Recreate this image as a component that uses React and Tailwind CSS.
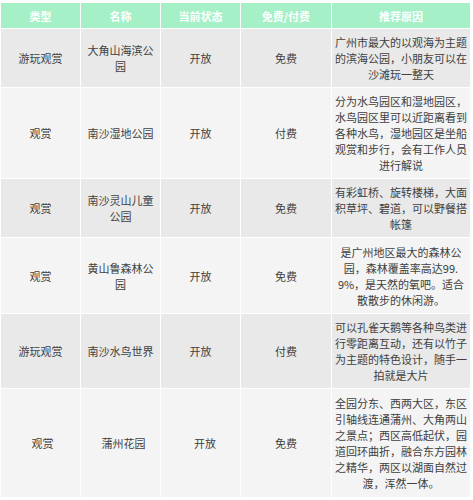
import React from "react";

const rows = [
  { type: "游玩观赏", name: ["大角山海滨公", "园"], status: "开放", fee: "免费", reason: ["广州市最大的以观海为主题", "的滨海公园，小朋友可以在", "沙滩玩一整天"], h: "h-[58px]" },
  { type: "观赏", name: ["南沙湿地公园"], status: "开放", fee: "付费", reason: ["分为水鸟园区和湿地园区，", "水鸟园区里可以近距离看到", "各种水鸟，湿地园区是坐船", "观赏和步行，会有工作人员", "进行解说"], h: "h-[90px]" },
  { type: "观赏", name: ["南沙灵山儿童", "公园"], status: "开放", fee: "免费", reason: ["有彩虹桥、旋转楼梯，大面", "积草坪、碧道，可以野餐搭", "帐篷"], h: "h-[58px]" },
  { type: "观赏", name: ["黄山鲁森林公", "园"], status: "开放", fee: "免费", reason: ["是广州地区最大的森林公", "园，森林覆盖率高达99.", "9%，是天然的氧吧。适合", "散散步的休闲游。"], h: "h-[75px]" },
  { type: "游玩观赏", name: ["南沙水鸟世界"], status: "开放", fee: "付费", reason: ["可以孔雀天鹅等各种鸟类进", "行零距离互动，还有以竹子", "为主题的特色设计，随手一", "拍就是大片"], h: "h-[74px]" },
  { type: "观赏", name: ["蒲州花园"], status: "开放", fee: "免费", reason: ["全园分东、西两大区，东区", "引轴线连通蒲州、大角两山", "之景点；西区高低起伏，园", "道回环曲折，融合东方园林", "之精华，两区以湖面自然过", "渡，浑然一体。"], h: "h-[108px]", last: true },
];

function Cell({ children, bg, extra = "" }) {
  return (
    <div className={`flex flex-col items-center justify-center text-center ${bg} ${extra}`}>
      {children}
    </div>
  );
}

export default function App() {
  return (
    <div className="w-[473px] h-[500px] bg-white pt-[3px] pl-[1px]" style={{ fontFamily: '"Noto Sans CJK SC", "Noto Sans", sans-serif' }}>
      <div className="grid grid-cols-[79px_79px_79px_90px_138px] gap-px bg-white text-[11px] leading-[16px] text-[#404040]">
        {["类型", "名称", "当前状态", "免费/付费", "推荐原因"].map((t) => (
          <div key={t} className="h-[25px] bg-[#a6f0c8] flex items-center justify-center font-bold text-white">
            {t}
          </div>
        ))}
        {rows.map((r, i) => {
          const bg = i % 2 === 0 ? "bg-[#e9e9e9]" : "bg-[#f4f4f4]";
          return (
            <React.Fragment key={i}>
              <Cell bg={`${bg} ${r.h}`} extra={r.last ? "pl-[4px]" : ""}>{r.type}</Cell>
              <Cell bg={`${bg} ${r.h}`} extra={r.last ? "pl-[6px]" : ""}>
                {r.name.map((l, j) => (
                  <span key={j} className="block whitespace-nowrap">{l}</span>
                ))}
              </Cell>
              <Cell bg={`${bg} ${r.h}`} extra={r.last ? "pl-[9px]" : ""}>{r.status}</Cell>
              <Cell bg={`${bg} ${r.h}`}>{r.fee}</Cell>
              <Cell bg={`${bg} ${r.h}`}>
                {r.reason.map((l, j) => (
                  <span key={j} className="block whitespace-nowrap">{l}</span>
                ))}
              </Cell>
            </React.Fragment>
          );
        })}
      </div>
    </div>
  );
}
